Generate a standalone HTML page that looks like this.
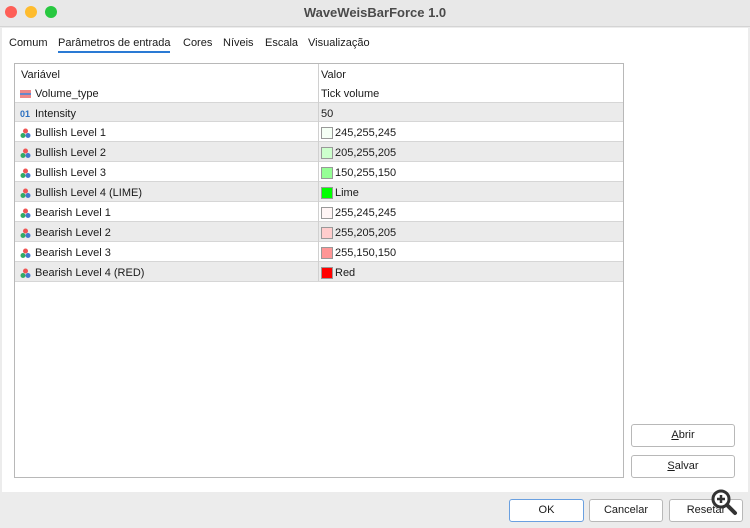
<!DOCTYPE html>
<html><head><meta charset="utf-8"><style>
*{box-sizing:border-box;margin:0;padding:0}
body{width:750px;height:528px;background:#ececec;font-family:"Liberation Sans",sans-serif;font-size:11px;color:#1a1a1a;position:relative;overflow:hidden}
.title{position:absolute;left:0;top:0;width:750px;height:27px;background:#e8e8e8;border-bottom:1px solid #d4d4d4;text-align:center;font-weight:bold;font-size:13px;color:#4a4a4a;line-height:25px}
.dot{position:absolute;top:6px;width:12px;height:12px;border-radius:50%}
.main{position:absolute;left:2px;top:28px;width:746px;height:464px;background:#fff}
.tab{position:absolute;top:37px;font-size:11px}
.table{position:absolute;left:14px;top:63px;width:610px;height:415px;border:1px solid #b8b8b8;background:#fff}
.row{position:absolute;left:0;width:608px;height:20px;border-bottom:1px solid #d6d6d6;line-height:22px}
.row.g{background:#ebebeb}
.c1{position:absolute;left:20px}
.c2{position:absolute;left:306px;display:flex;align-items:center;height:22px}
.sw{width:12px;height:12px;border:1px solid #999;margin-right:2px}
.ic{position:absolute;left:5px;top:6px}
.btn{position:absolute;height:23px;border:1px solid #b8b8b8;border-radius:3px;background:#fff;text-align:center;line-height:21px;font-size:11px}
</style></head><body>
<div class="title">WaveWeisBarForce 1.0</div>
<div class="dot" style="left:5px;background:#fe5f57"></div>
<div class="dot" style="left:25px;background:#febc2e"></div>
<div class="dot" style="left:45px;background:#28c840"></div>
<div class="main"></div>
<div class="tab" style="left:9px">Comum</div>
<div class="tab" style="left:58px">Parâmetros de entrada</div>
<div style="position:absolute;left:58px;top:51px;width:112px;height:2px;background:#2a7ad4"></div>
<div class="tab" style="left:183px">Cores</div>
<div class="tab" style="left:223px">Níveis</div>
<div class="tab" style="left:265px">Escala</div>
<div class="tab" style="left:308px">Visualização</div>
<div class="table">
<div class="row" style="top:0;border-bottom:none"><span class="c1" style="left:6px">Variável</span><span class="c2">Valor</span></div>
<div class="row" style="top:19px;border-bottom:none"><svg class="ic" width="11" height="10"><rect x="0" y="1" width="11" height="3" fill="#e88"/><rect x="0" y="4" width="11" height="2" fill="#68c"/><rect x="0" y="6" width="11" height="3" fill="#e88"/></svg><span class="c1">Volume_type</span><span class="c2">Tick volume</span></div>
<div class="row g" style="top:38px;border-top:1px solid #d6d6d6"><span class="ic" style="top:0;font-size:9px;color:#2a6fc0;font-weight:bold">01</span><span class="c1">Intensity</span><span class="c2">50</span></div>
<div style="position:absolute;left:303px;top:0;width:1px;height:217px;background:#d0d0d0"></div>
</div>
<div class="btn" style="left:631px;top:424px;width:104px"><u>A</u>brir</div>
<div class="btn" style="left:631px;top:455px;width:104px"><u>S</u>alvar</div>
<div class="btn" style="left:509px;top:499px;width:75px;border-color:#6aa0e0">OK</div>
<div class="btn" style="left:589px;top:499px;width:74px">Cancelar</div>
<div class="btn" style="left:669px;top:499px;width:74px">Resetar</div>
<svg style="position:absolute;left:709px;top:488px" width="30" height="30"><circle cx="12" cy="11" r="8" fill="#fff" stroke="#333" stroke-width="3"/><path d="M8 11h8M12 7v8" stroke="#333" stroke-width="2.5"/><path d="M18 17l8 8" stroke="#333" stroke-width="4" stroke-linecap="round"/></svg>
<div style="position:absolute;left:15px;top:122px;width:608px">
<div class="row" style="top:0"><svg class="ic" width="11" height="11"><circle cx="5.5" cy="3" r="2.5" fill="#e55"/><circle cx="3" cy="7.5" r="2.5" fill="#3a6"/><circle cx="8" cy="7.5" r="2.5" fill="#47c"/></svg><span class="c1">Bullish Level 1</span><span class="c2"><span class="sw" style="background:rgb(245,255,245)"></span>245,255,245</span></div>
<div class="row g" style="top:20px"><svg class="ic" width="11" height="11"><circle cx="5.5" cy="3" r="2.5" fill="#e55"/><circle cx="3" cy="7.5" r="2.5" fill="#3a6"/><circle cx="8" cy="7.5" r="2.5" fill="#47c"/></svg><span class="c1">Bullish Level 2</span><span class="c2"><span class="sw" style="background:rgb(205,255,205)"></span>205,255,205</span></div>
<div class="row" style="top:40px"><svg class="ic" width="11" height="11"><circle cx="5.5" cy="3" r="2.5" fill="#e55"/><circle cx="3" cy="7.5" r="2.5" fill="#3a6"/><circle cx="8" cy="7.5" r="2.5" fill="#47c"/></svg><span class="c1">Bullish Level 3</span><span class="c2"><span class="sw" style="background:rgb(150,255,150)"></span>150,255,150</span></div>
<div class="row g" style="top:60px"><svg class="ic" width="11" height="11"><circle cx="5.5" cy="3" r="2.5" fill="#e55"/><circle cx="3" cy="7.5" r="2.5" fill="#3a6"/><circle cx="8" cy="7.5" r="2.5" fill="#47c"/></svg><span class="c1">Bullish Level 4 (LIME)</span><span class="c2"><span class="sw" style="background:#0f0"></span>Lime</span></div>
<div class="row" style="top:80px"><svg class="ic" width="11" height="11"><circle cx="5.5" cy="3" r="2.5" fill="#e55"/><circle cx="3" cy="7.5" r="2.5" fill="#3a6"/><circle cx="8" cy="7.5" r="2.5" fill="#47c"/></svg><span class="c1">Bearish Level 1</span><span class="c2"><span class="sw" style="background:rgb(255,245,245)"></span>255,245,245</span></div>
<div class="row g" style="top:100px"><svg class="ic" width="11" height="11"><circle cx="5.5" cy="3" r="2.5" fill="#e55"/><circle cx="3" cy="7.5" r="2.5" fill="#3a6"/><circle cx="8" cy="7.5" r="2.5" fill="#47c"/></svg><span class="c1">Bearish Level 2</span><span class="c2"><span class="sw" style="background:rgb(255,205,205)"></span>255,205,205</span></div>
<div class="row" style="top:120px"><svg class="ic" width="11" height="11"><circle cx="5.5" cy="3" r="2.5" fill="#e55"/><circle cx="3" cy="7.5" r="2.5" fill="#3a6"/><circle cx="8" cy="7.5" r="2.5" fill="#47c"/></svg><span class="c1">Bearish Level 3</span><span class="c2"><span class="sw" style="background:rgb(255,150,150)"></span>255,150,150</span></div>
<div class="row g" style="top:140px"><svg class="ic" width="11" height="11"><circle cx="5.5" cy="3" r="2.5" fill="#e55"/><circle cx="3" cy="7.5" r="2.5" fill="#3a6"/><circle cx="8" cy="7.5" r="2.5" fill="#47c"/></svg><span class="c1">Bearish Level 4 (RED)</span><span class="c2"><span class="sw" style="background:#f00"></span>Red</span></div>
<div style="position:absolute;left:303px;top:0;width:1px;height:159px;background:#d0d0d0"></div>
</div>
</body></html>
